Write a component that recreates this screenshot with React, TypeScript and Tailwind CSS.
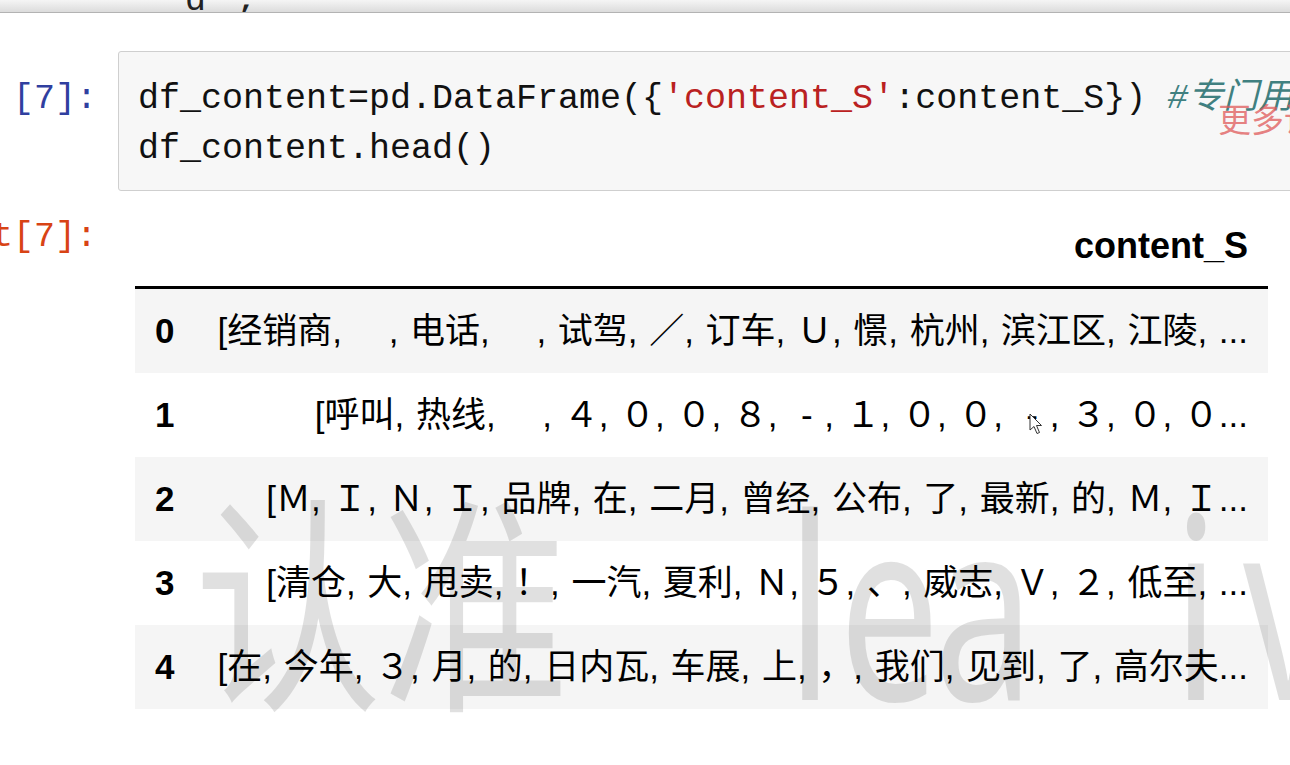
import React from "react";

const rows: { items: string[]; trailing: boolean }[] = [
  {
    items: ["经销商", "\u3000", "电话", "\u3000", "试驾", "／", "订车", "Ｕ", "憬", "杭州", "滨江区", "江陵"],
    trailing: true,
  },
  {
    items: ["呼叫", "热线", "\u3000", "４", "０", "０", "８", "-", "１", "０", "０", "-", "３", "０", "０"],
    trailing: false,
  },
  {
    items: ["Ｍ", "Ｉ", "Ｎ", "Ｉ", "品牌", "在", "二月", "曾经", "公布", "了", "最新", "的", "Ｍ", "Ｉ"],
    trailing: false,
  },
  {
    items: ["清仓", "大", "甩卖", "！", "一汽", "夏利", "Ｎ", "５", "、", "威志", "Ｖ", "２", "低至"],
    trailing: true,
  },
  {
    items: ["在", "今年", "３", "月", "的", "日内瓦", "车展", "上", "，", "我们", "见到", "了", "高尔夫"],
    trailing: false,
  },
];

function Sep() {
  return <span className="tracking-[0.95px]">{", "}</span>;
}

function Item({ text }: { text: string }) {
  if (text === "-") {
    return <span className="inline-block w-[35px] text-center">-</span>;
  }
  return <span>{text}</span>;
}

function RowText({ items, trailing }: { items: string[]; trailing: boolean }) {
  return (
    <>
      <span>[</span>
      {items.map((it, i) => (
        <React.Fragment key={i}>
          <Item text={it} />
          {i < items.length - 1 && <Sep />}
        </React.Fragment>
      ))}
      {trailing && <Sep />}
      <span>...</span>
    </>
  );
}

export default function App() {
  return (
    <div className="relative w-[1290px] h-[765px] overflow-hidden bg-white">
      {/* top shadow bar with clipped previous output */}
      <div className="h-[13px] overflow-hidden bg-linear-to-b from-[#f5f5f5] to-[#dcdcdc] border-b border-[#b3b3b3]">
        <div className="font-['Liberation_Mono','Noto_Sans_CJK_SC',monospace] text-[35px] leading-[50px] mt-[-24px] pl-[185px] text-[#222] whitespace-pre">
          d<span className="ml-[10px]">{" ,"}</span>
        </div>
      </div>

      {/* code cell */}
      <div className="flex mt-[38px]">
        <div className="w-[118px] shrink-0 flex justify-end pr-[21px] pt-[23px]">
          <span className="shrink-0 font-['Liberation_Mono','Noto_Sans_CJK_SC',monospace] text-[35px] leading-[50px] text-[#303f9f] whitespace-nowrap">
            [7]:
          </span>
        </div>
        <div className="w-[1400px] shrink-0 border border-[#cfcfcf] bg-[#f7f7f7] rounded-[3px] pt-[22px] pb-[16px] pl-[19px] font-['Liberation_Mono','Noto_Sans_CJK_SC',monospace] text-[35px] leading-[50px] text-[#111] whitespace-pre">
          <div>
            {"df_content=pd.DataFrame({"}
            <span className="text-[#ba2121]">{"'content_S'"}</span>
            {":content_S}) "}
            <span className="italic text-[#408080]">#专门用于展示</span>
          </div>
          <div>df_content.head()</div>
        </div>
      </div>

      {/* output cell */}
      <div className="flex mt-[14px]">
        <div className="w-[118px] shrink-0 flex justify-end pr-[21px] pt-[7px]">
          <span className="shrink-0 font-['Liberation_Mono','Noto_Sans_CJK_SC',monospace] text-[35px] leading-[50px] text-[#d84315] whitespace-nowrap">
            Out[7]:
          </span>
        </div>
        <div className="ml-[17px] w-[1133px] shrink-0 font-['Liberation_Sans','Noto_Sans_CJK_SC',sans-serif] text-black">
          <div className="flex border-b-[3px] border-black pt-[20px] pb-[20px]">
            <div className="w-[60px]" />
            <div className="flex-1 text-right pr-[20px] font-bold text-[36px] leading-[41px]">content_S</div>
          </div>
          {rows.map((r, i) => (
            <div
              key={i}
              className={i % 2 === 0 ? "flex items-center h-[84px] bg-[#f5f5f5]" : "flex items-center h-[84px] bg-white"}
            >
              <div className="w-[60px] shrink-0 pl-[20px] font-bold text-[35px] leading-[40px]">{i}</div>
              <div className="flex-1 text-right pr-[20px] text-[35px] leading-[40px] whitespace-nowrap">
                <RowText items={r.items} trailing={r.trailing} />
              </div>
            </div>
          ))}
        </div>
      </div>

      {/* video overlay: watermark */}
      <div className="pointer-events-none absolute inset-0 text-black/[0.12]">
        <span className="absolute left-[194px] top-[478px] origin-left scale-x-[0.815] text-[230px] leading-[230px] font-['Noto_Sans_CJK_SC',sans-serif] whitespace-nowrap">
          认准
        </span>
        <span className="absolute left-[787px] top-[474px] origin-left scale-x-[0.7] text-[255px] leading-[255px] font-['Noto_Sans',sans-serif]">
          l
        </span>
        <span className="absolute left-[839px] top-[474px] origin-left scale-x-[0.7] text-[255px] leading-[255px] font-['Noto_Sans',sans-serif]">
          e
        </span>
        <span className="absolute left-[934px] top-[474px] origin-left scale-x-[0.7] text-[255px] leading-[255px] font-['Noto_Sans',sans-serif]">
          a
        </span>
        <span className="absolute left-[1173px] top-[474px] origin-left scale-x-[0.7] text-[255px] leading-[255px] font-['Noto_Sans',sans-serif]">
          i
        </span>
        <span className="absolute left-[1243px] top-[474px] origin-left scale-x-[0.7] text-[255px] leading-[255px] font-['Noto_Sans',sans-serif]">
          v
        </span>
      </div>

      {/* video overlay: link text */}
      <div className="pointer-events-none absolute left-[1218px] top-[98px] whitespace-nowrap font-['Noto_Sans_CJK_SC',sans-serif] text-[33px] leading-[40px] text-[#e05a5a]/75">
        更多课程
      </div>

      {/* mouse pointer */}
      <svg className="absolute left-[1029px] top-[413px]" width="14" height="22" viewBox="0 0 14 22">
        <path d="M1 1 L1 17 L5 13.5 L8 20.5 L10.5 19.5 L7.5 12.5 L12.5 12.5 Z" fill="#ffffff" stroke="#333333" strokeWidth="1" strokeLinejoin="round" />
      </svg>
    </div>
  );
}
